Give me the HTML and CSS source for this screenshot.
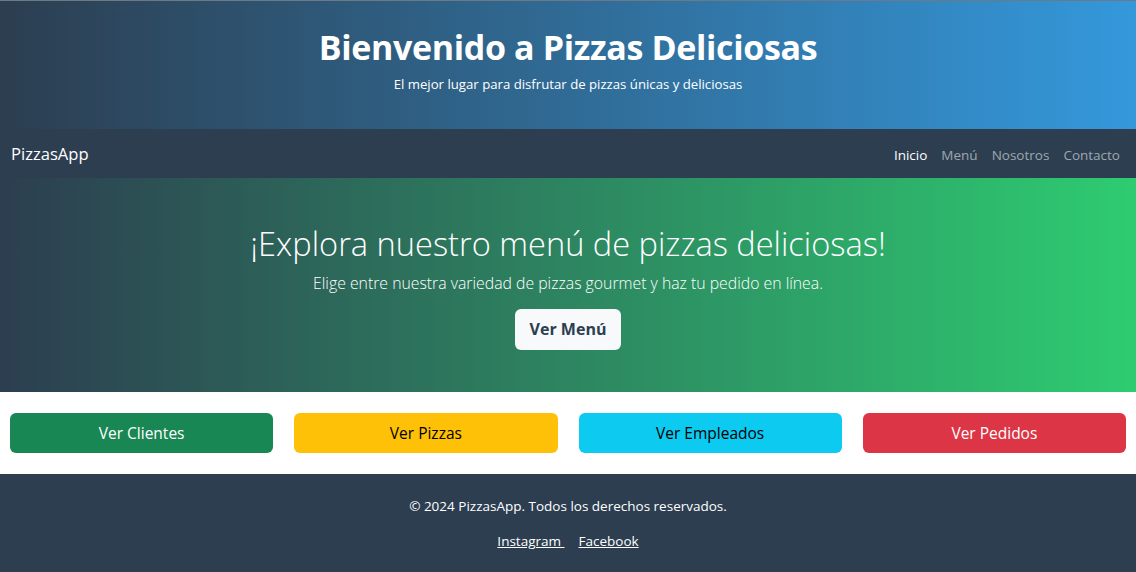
FILE: index.html
```html
<!DOCTYPE html>
<html lang="es">
<head>
<meta charset="utf-8">
<title>PizzasApp</title>
<link rel="stylesheet" href="styles.css">
</head>
<body>
<header class="site-header">
  <h1 class="site-title">Bienvenido a Pizzas Deliciosas</h1>
  <p class="site-tagline">El mejor lugar para disfrutar de pizzas únicas y deliciosas</p>
</header>
<nav class="navbar">
  <a class="brand" href="#">PizzasApp</a>
  <ul class="nav-links">
    <li><a class="active" href="#">Inicio</a></li>
    <li><a href="#">Menú</a></li>
    <li><a href="#">Nosotros</a></li>
    <li><a href="#">Contacto</a></li>
  </ul>
</nav>
<section class="hero">
  <h2 class="hero-title">¡Explora nuestro menú de pizzas deliciosas!</h2>
  <p class="hero-text">Elige entre nuestra variedad de pizzas gourmet y haz tu pedido en línea.</p>
  <a class="hero-btn" href="#">Ver Menú</a>
</section>
<section class="actions">
  <a class="action green" href="#">Ver Clientes</a>
  <a class="action yellow" href="#">Ver Pizzas</a>
  <a class="action cyan" href="#">Ver Empleados</a>
  <a class="action red" href="#">Ver Pedidos</a>
</section>
<footer class="site-footer">
  <p class="copy">© 2024 PizzasApp. Todos los derechos reservados.</p>
  <p class="social"><a href="#">Instagram </a><a href="#">Facebook</a></p>
</footer>
</body>
</html>
```

FILE: styles.css
```css
* { box-sizing: border-box; }
html, body { margin: 0; padding: 0; }
body {
  font-family: "Open Sans", "Noto Sans", "DejaVu Sans", sans-serif;
  color: #212529;
  background: #fff;
}
a { text-decoration: none; }

.site-header {
  height: 129px;
  background: linear-gradient(to right, #2c3e50, #3498db);
  color: #fff;
  display: flex;
  flex-direction: column;
  align-items: center;
  padding-top: 26px;
  border-top: 1px solid #6d7a86;
}
.site-title {
  margin: 0;
  font-size: 34px;
  line-height: 40px;
  font-weight: 700;
  letter-spacing: -0.35px;
}
.site-tagline {
  margin: 7px 0 0;
  font-size: 13.2px;
  line-height: 20px;
}

.navbar {
  height: 49px;
  background: #2c3e50;
  display: flex;
  align-items: center;
  justify-content: space-between;
  padding: 0 16px 0 11px;
}
.brand {
  color: #fff;
  font-size: 16.6px;
}
.nav-links {
  list-style: none;
  margin: 0;
  padding: 0;
  display: flex;
  gap: 14px;
}
.nav-links a {
  color: rgba(255,255,255,0.55);
  font-size: 13.5px;
}
.nav-links a.active { color: #fff; }

.hero {
  height: 214px;
  background: linear-gradient(to right, #2c3e50, #2ecc71);
  color: #fff;
  display: flex;
  flex-direction: column;
  align-items: center;
  padding-top: 44px;
}
.hero-title {
  margin: 0;
  font-size: 32.6px;
  line-height: 44px;
  font-weight: 300;
}
.hero-text {
  margin: 5px 0 0;
  font-size: 15.8px;
  line-height: 24px;
  font-weight: 300;
}
.hero-btn {
  margin-top: 14px;
  background: #f8f9fa;
  color: #2c3e50;
  font-weight: 700;
  font-size: 16px;
  line-height: 24px;
  padding: 8px 15px 9px;
  border-radius: 6px;
}

.actions {
  height: 82px;
  display: grid;
  grid-template-columns: repeat(4, 1fr);
  gap: 21px;
  padding: 21px 10px;
}
.action {
  display: flex;
  align-items: center;
  justify-content: center;
  border-radius: 6px;
  font-size: 15.5px;
}
.green { background: #198754; color: #fff; }
.yellow { background: #ffc107; color: #000; }
.cyan { background: #0dcaf0; color: #000; }
.red { background: #dc3545; color: #fff; }

.site-footer {
  height: 98px;
  background: #2c3e50;
  color: #fff;
  text-align: center;
  padding-top: 22px;
  font-size: 13.5px;
}
.copy { margin: 0; line-height: 20px; }
.social { margin: 15px 0 0; line-height: 20px; }
.social a {
  color: #fff;
  text-decoration: underline;
  margin: 0 7px;
}
```
